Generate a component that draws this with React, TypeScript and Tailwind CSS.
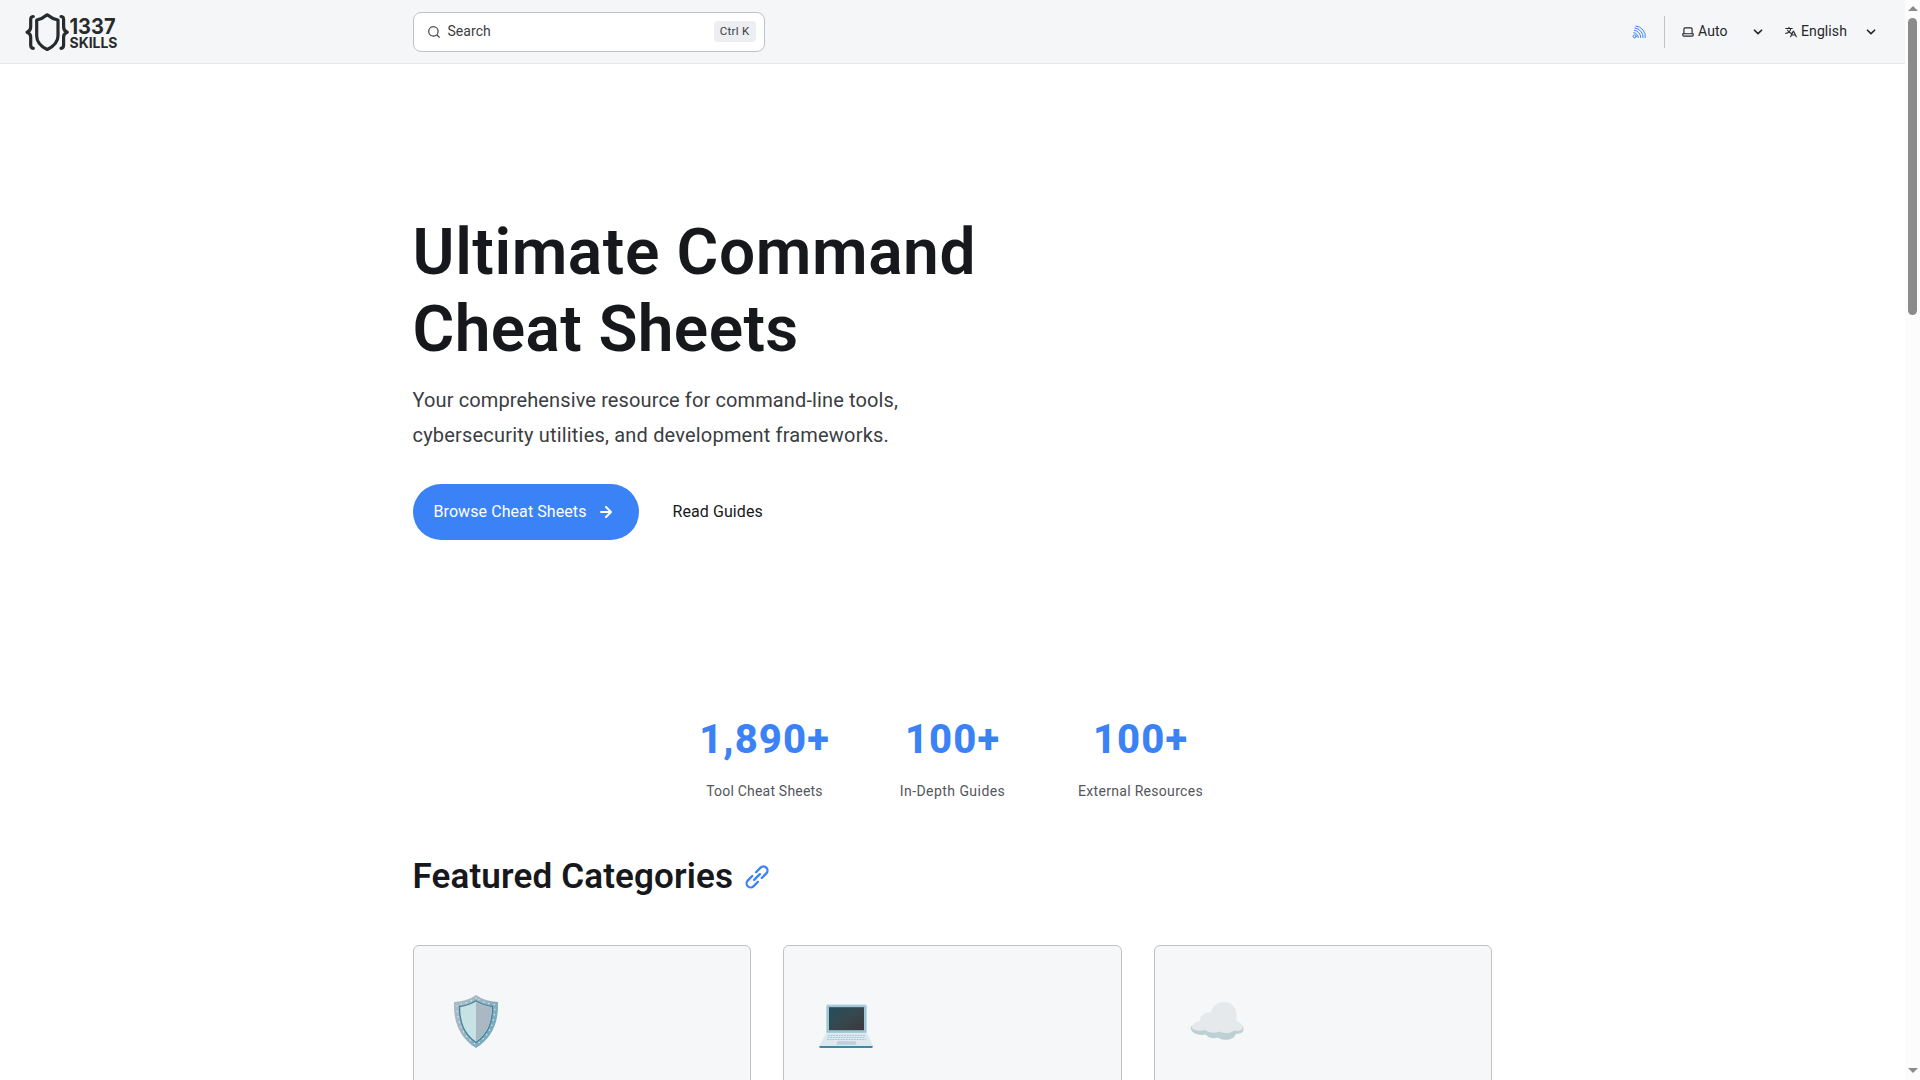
import React from "react";

const ICONS = {
    search: "M21.71 20.29 18 16.61A9 9 0 1 0 16.61 18l3.68 3.68a.999.999 0 0 0 1.42 0 1 1 0 0 0 0-1.39ZM11 18a7 7 0 1 1 0-14 7 7 0 0 1 0 14Z",
    laptop: "M21 14h-1V7a3 3 0 0 0-3-3H7a3 3 0 0 0-3 3v7H3a1 1 0 0 0-1 1v2a3 3 0 0 0 3 3h14a3 3 0 0 0 3-3v-2a1 1 0 0 0-1-1ZM6 7a1 1 0 0 1 1-1h10a1 1 0 0 1 1 1v7H6V7Zm14 10a1 1 0 0 1-1 1H5a1 1 0 0 1-1-1v-1h16v1Z",
    caret: "M17 9.17a1 1 0 0 0-1.41 0L12 12.71 8.46 9.17a1 1 0 1 0-1.41 1.42l4.24 4.24a1.002 1.002 0 0 0 1.42 0L17 10.59a1.002 1.002 0 0 0 0-1.42Z",
    translate: "M8.516 3a.94.94 0 0 0-.941.94v1.15H2.94a.94.94 0 1 0 0 1.882h7.362a7.422 7.422 0 0 1-1.787 3.958 7.42 7.42 0 0 1-1.422-2.425.94.94 0 1 0-1.774.627 9.303 9.303 0 0 0 1.785 3.043 7.422 7.422 0 0 1-4.164 1.278.94.94 0 1 0 0 1.881 9.303 9.303 0 0 0 5.575-1.855 9.303 9.303 0 0 0 4.11 1.74l-.763 1.525a.968.968 0 0 0-.016.034l-1.385 2.77a.94.94 0 1 0 1.683.841l1.133-2.267h5.806l1.134 2.267a.94.94 0 0 0 1.683-.841l-1.385-2.769a.95.95 0 0 0-.018-.036l-3.476-6.951a.94.94 0 0 0-1.682 0l-1.82 3.639a7.423 7.423 0 0 1-3.593-1.256 9.303 9.303 0 0 0 2.27-5.203h1.894a.94.94 0 0 0 0-1.881H9.456V3.94A.94.94 0 0 0 8.516 3Zm6.426 11.794a1.068 1.068 0 0 1-.02.039l-.703 1.407h3.924l-1.962-3.924-1.24 2.478Z",
    arrow: "M17.92 11.62a1.001 1.001 0 0 0-.21-.33l-5-5a1.003 1.003 0 1 0-1.42 1.42l3.3 3.29H7a1 1 0 0 0 0 2h7.59l-3.3 3.29a1.002 1.002 0 0 0 .325 1.639 1 1 0 0 0 1.095-.219l5-5a1 1 0 0 0 .21-.33 1 1 0 0 0 0-.76Z",
    link: "m12.11 15.39-3.88 3.88a2.52 2.52 0 0 1-3.5 0 2.47 2.47 0 0 1 0-3.5l3.88-3.88a1 1 0 0 0-1.42-1.42l-3.88 3.89a4.48 4.48 0 0 0 6.33 6.33l3.89-3.88a1 1 0 1 0-1.42-1.42Zm8.58-12.08a4.49 4.49 0 0 0-6.33 0l-3.89 3.88a1 1 0 0 0 1.42 1.42l3.88-3.88a2.52 2.52 0 0 1 3.5 0 2.47 2.47 0 0 1 0 3.5l-3.88 3.88a1 1 0 1 0 1.42 1.42l3.88-3.89a4.49 4.49 0 0 0 0-6.33ZM8.83 15.17a1 1 0 0 0 1.1.22 1 1 0 0 0 .32-.22l4.92-4.92a1 1 0 0 0-1.42-1.42l-4.92 4.92a1 1 0 0 0 0 1.42Z",
};

const STATS = [
    { value: "1,890+", label: "Tool Cheat Sheets", labelCls: "tracking-[0.2px]" },
    { value: "100+", label: "In-Depth Guides", labelCls: "tracking-[0.45px]" },
    { value: "100+", label: "External Resources", labelCls: "tracking-[0.3px]" },
];

function Icon({ name, className }: { name: keyof typeof ICONS; className: string }) {
    return (
        <svg viewBox="0 0 24 24" fill="currentColor" className={`shrink-0 ${className}`} aria-hidden="true">
            <path fillRule="evenodd" clipRule="evenodd" d={ICONS[name]} />
        </svg>
    );
}

function RssIcon() {
    return (
        <svg viewBox="0 0 24 24" fill="none" stroke="currentColor" strokeWidth="1.7" strokeLinecap="round" className="w-3.5 h-3.5 text-[#3b82f6]">
            <circle cx="4.500" cy="19.500" r="2.700" />
            <path d="M3 13.200A8 8 0 0 1 10.800 21.500M4 9A12 12 0 0 1 15 21.500M5 5.200A15.500 15.500 0 0 1 19 21.500M6.500 1.800A17.500 17.500 0 0 1 22.800 21.500" />
        </svg>
    );
}

function Logo() {
    return (
        <svg viewBox="0 0 96 40" className="w-24 h-10 text-[#272b2d]" fill="none" stroke="currentColor" aria-label="1337 Skills">
            <g strokeWidth="3.2" strokeLinecap="round" strokeLinejoin="round">
                <path d="M9.300 4.500H9Q6.700 4.700 6.700 7.500V15Q6.700 19 3 20.300Q6.700 21.600 6.700 25V33Q6.700 36 9.300 36.300" />
                <path d="M37 4.500H37.300Q39.600 4.700 39.600 7.500V15Q39.600 19 43.300 20.300Q39.600 21.600 39.600 25V33Q39.600 36 37 36.300" />
                <path d="M23.200 2.800Q18.500 6.800 12.700 8V24C12.700 30.500 17 34.500 23.200 37.500C29.400 34.500 34 30.500 34 24V8Q28 6.800 23.200 2.800Z" />
            </g>
            <text x="45.5" y="22.3" textLength="46" lengthAdjust="spacingAndGlyphs" fill="currentColor" stroke="none" className="font-['Inter'] font-bold text-[21.5px]">1337</text>
            <text x="45.5" y="36" textLength="48" lengthAdjust="spacingAndGlyphs" fill="currentColor" stroke="none" className="font-['Inter'] font-bold text-[14.5px]">SKILLS</text>
        </svg>
    );
}

function Header() {
    return (
        <header className="h-16 flex items-center bg-[#f5f6f8] border-b border-[#e7e8ec] text-[#24272b] text-sm">
            <div className="w-[412.5px] pl-6"><Logo /></div>
            <button className="w-[352px] h-10 flex items-center rounded-lg border border-[#c0c2c7] bg-white pl-[13px] pr-2 text-[#3a3d42]">
                <Icon name="search" className="w-3.5 h-3.5" />
                <span className="ml-[7px] mb-px tracking-[0.05px]">Search</span>
                <kbd className="ml-auto h-[21px] flex items-center rounded bg-[#edeef2] px-1.5 font-['Roboto'] text-[11.5px] tracking-[0.3px] text-[#3a3d42]">Ctrl K</kbd>
            </button>
            <div className="ml-auto flex items-center">
                <RssIcon />
                <span className="ml-[18px] h-8 border-l border-[#c0c2c7]" />
                <Icon name="laptop" className="ml-4 w-3.5 h-3.5" />
                <span className="ml-[3px] mb-px w-[50px] tracking-[0.1px]">Auto</span>
                <Icon name="caret" className="w-5 h-5" />
                <Icon name="translate" className="ml-4 w-3.5 h-3.5" />
                <span className="ml-[3px] mb-px w-[60px] tracking-[0.1px]">English</span>
                <Icon name="caret" className="w-5 h-5 mr-6" />
            </div>
        </header>
    );
}

function Hero() {
    return (
        <section className="pt-[151px]">
            <h1 className="text-[64px] leading-[76.8px] font-semibold text-[#17181c]">
                <span className="block tracking-[0.6px]">Ultimate Command</span>
                <span className="block tracking-[0.35px]">Cheat Sheets</span>
            </h1>
            <p className="mt-3.5 text-xl leading-[35px] text-[#3a3d42]">
                <span className="block tracking-[0.12px]">Your comprehensive resource for command-line tools,</span>
                <span className="block tracking-[0.19px]">cybersecurity utilities, and development frameworks.</span>
            </p>
            <div className="mt-[31px] flex items-center">
                <a className="w-[226px] h-14 flex items-center rounded-full bg-[#3b82f6] pl-[21px] text-white">
                    <span className="w-[152px] whitespace-nowrap tracking-[0.08px]">Browse Cheat Sheets</span>
                    <Icon name="arrow" className="ml-2 w-6 h-6" />
                </a>
                <a className="ml-[34px] tracking-[0.08px] text-[#17181c]">Read Guides</a>
            </div>
        </section>
    );
}

function ShieldEmoji() {
    return (
        <svg viewBox="0 0 44 53" className="ml-2 w-11 h-[53px]">
            <defs>
                <linearGradient id="rim" x1="0" x2="1" y1="0" y2="0.6">
                    <stop offset="0" stopColor="#a9bdc8" />
                    <stop offset="0.45" stopColor="#a3b5c2" />
                    <stop offset="1" stopColor="#6fa9bb" />
                </linearGradient>
            </defs>
            <path d="M22 0Q14 6 0 7C-1 28 7 44 22 53C37 44 45 28 44 7Q30 6 22 0Z" fill="url(#rim)" />
            <path d="M22 3Q14 8.500 3 9.500C3 28 9 41 22 49.500C35 41 41 28 41 9.500Q30 8.500 22 3Z" fill="none" stroke="#d9e8ef" strokeWidth="1.400" strokeLinecap="round" strokeDasharray="0.100 5.300" />
            <path d="M22 5.800Q15 10.500 5.500 11.500C5.500 28 10 39 22 47.500C34 39 38.500 28 38.500 11.500Q29 10.500 22 5.800Z" fill="#c7e2e5" stroke="#40829a" strokeWidth="1.300" />
            <path d="M22 6.800Q29 11.300 37.700 12.200C37.700 28 33 38 22 46.500Z" fill="#a9b8c3" />
        </svg>
    );
}

function LaptopEmoji() {
    return (
        <svg viewBox="0 0 54 44" className="ml-[3px] w-[54px] h-11">
            <defs>
                <linearGradient id="screen" x1="0" x2="1" y1="0" y2="1">
                    <stop offset="0" stopColor="#244e59" />
                    <stop offset="0.5" stopColor="#36484f" />
                    <stop offset="1" stopColor="#3b393d" />
                </linearGradient>
            </defs>
            <rect x="7" y="0.500" width="41" height="29" rx="2" fill="#b9dce7" />
            <rect x="8" y="1.200" width="39" height="27.500" rx="1.200" fill="#9fc6d5" />
            <rect x="10" y="3.200" width="35" height="23" fill="url(#screen)" />
            <path d="M7 29H48L54 42H0.500Z" fill="#dce9ef" />
            <path d="M9 31.500H46M8.500 33.500H46.500M8 35.500H47" stroke="#a9c4d2" strokeWidth="1" strokeDasharray="1.800 0.900" />
            <path d="M18.500 37.200H36.500L37.500 40.800H17.500Z" fill="#b5d1dc" />
            <path d="M0.300 42H53.700V43Q53.700 44 52.500 44H1.500Q0.300 44 0.300 43Z" fill="#3f87a5" />
        </svg>
    );
}

function CloudEmoji() {
    return (
        <svg viewBox="0 0 54 38" className="mb-2 ml-[3px] w-[54px] h-[38px]">
            <path d="M0.500 25C4 23 10 19 16 20L48 21Q54 23 53.500 28C52.500 32 48 31.500 46 32C43 39 33 39 28 35.500C23 37.500 18 35.500 15.500 32.500C8 34 0.500 31 0.500 25Z" fill="#bdd0d3" />
            <path d="M1.500 26C2.500 21.500 6 19.500 10 19C10 13 15 9.800 20.500 10.500C23 3 29 0 34.500 0C42 0.500 46.500 6 46.500 13V19C50.500 20 53 23.500 52.500 27C50 29.500 46 29 44 28.500C40 32 34 31.500 29.500 29.500C24 32 18 30.500 15 28C9 29.500 5 28.500 1.500 26Z" fill="#e5e9ec" />
        </svg>
    );
}

function Scrollbar() {
    return (
        <div className="w-[15px] h-full flex flex-col items-center justify-between bg-[#fcfcfc] pt-1.5 pb-[7px]">
            <div>
                <svg viewBox="0 0 10 5" className="w-2.5 h-[5px] text-[#8b8b8b]" fill="currentColor"><path d="M0 5 5 0l5 5Z" /></svg>
                <div className="mt-[7px] w-[9px] h-[297px] rounded-full bg-[#8b8b8b]" />
            </div>
            <svg viewBox="0 0 10 5" className="w-2.5 h-[5px] text-[#8b8b8b]" fill="currentColor"><path d="M0 0 5 5l5-5Z" /></svg>
        </div>
    );
}

export default function App() {
    return (
        <div className="w-[1920px] h-[1080px] overflow-hidden flex bg-white font-['Roboto',sans-serif]">
            <div className="w-[1905px] h-full overflow-hidden">
                <Header />
                <main className="w-[1080px] mx-auto">
                    <Hero />

                    <section className="mt-[172px] grid grid-cols-[124px_124px_124px] gap-16 justify-center text-center">
                        {STATS.map((s) => (
                            <div key={s.label} className="flex flex-col items-center whitespace-nowrap">
                                <div className="text-[40px] leading-[56px] font-extrabold tracking-[1.1px] text-[#3b82f6]">{s.value}</div>
                                <div className={`mt-[11px] text-sm leading-6 text-[#54565c] ${s.labelCls}`}>{s.label}</div>
                            </div>
                        ))}
                    </section>

                    <div className="mt-[50px] flex items-center gap-2.5 text-[#17181c]">
                        <h2 className="text-[35px] leading-[48px] font-semibold tracking-[0.15px]">Featured Categories</h2>
                        <Icon name="link" className="w-7 h-7 text-[#3b82f6]" />
                    </div>

                    <section className="mt-11 grid grid-cols-3 gap-8">
                        {[ShieldEmoji, LaptopEmoji, CloudEmoji].map((Emoji, i) => (
                            <article key={i} className="h-[220px] rounded-md border border-[#c0c2c7] bg-[#f5f7f9] px-8">
                                <div className="h-[102px] flex items-end"><Emoji /></div>
                            </article>
                        ))}
                    </section>
                </main>
            </div>
            <Scrollbar />
        </div>
    );
}
